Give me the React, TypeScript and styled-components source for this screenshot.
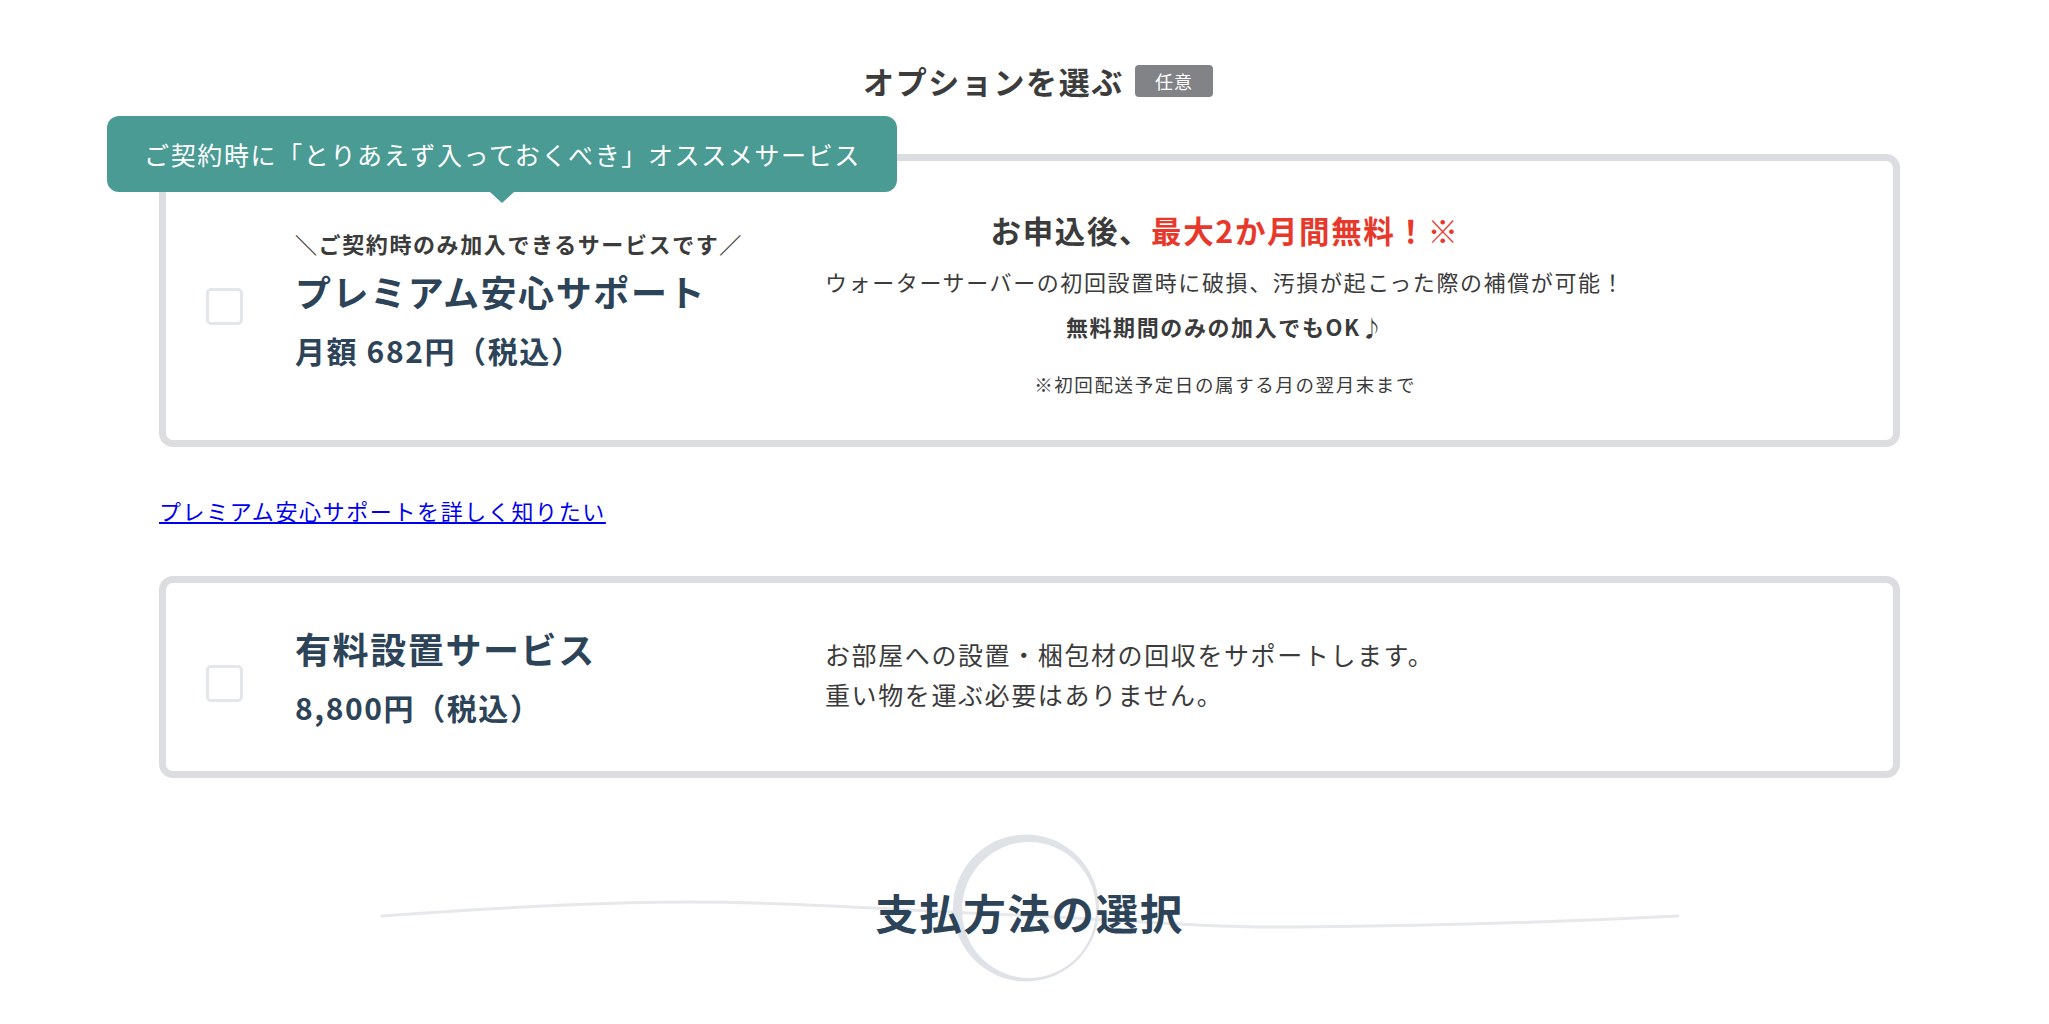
import React from 'react';
import styled, { createGlobalStyle } from 'styled-components';

const GlobalStyle = createGlobalStyle`
  html, body {
    margin: 0;
    padding: 0;
    background: #ffffff;
    overflow: hidden;
  }
  body {
    font-family: "Noto Sans CJK JP", "Noto Sans", sans-serif;
    letter-spacing: 0.1em;
    color: #3b3b3b;
  }
`;

const Page = styled.main`
  display: flex;
  flex-direction: column;
  padding: 58px 149px 0 159px;
`;

const TitleRow = styled.div`
  display: flex;
  align-items: center;
  justify-content: center;
  gap: 11px;
  height: 46px;
  padding-left: 17px;
`;

const Title = styled.h2`
  margin: 0;
  font-size: 31px;
  font-weight: 700;
  line-height: 46px;
  color: #3c3c3c;
`;

const Badge = styled.span`
  display: inline-flex;
  align-items: center;
  justify-content: center;
  width: 78px;
  height: 32px;
  border-radius: 4px;
  background: #818386;
  color: #ffffff;
  font-size: 18px;
  letter-spacing: 0.05em;
`;

const Card = styled.label<{ $minHeight: number; $mt: number }>`
  position: relative;
  display: flex;
  align-items: center;
  box-sizing: border-box;
  min-height: ${(p) => p.$minHeight}px;
  margin-top: ${(p) => p.$mt}px;
  padding: 0 40px;
  border: 7px solid #dcdde0;
  border-radius: 14px;
  background: #ffffff;
  cursor: pointer;
`;

const Tooltip = styled.div`
  position: absolute;
  left: -59px;
  top: -45px;
  display: flex;
  align-items: center;
  box-sizing: border-box;
  height: 76px;
  padding: 0 36px 0 37px;
  border-radius: 12px;
  background: #4a9b94;
  color: #ffffff;
  font-size: 25px;
  letter-spacing: 0.065em;
  white-space: nowrap;

  &::after {
    content: "";
    position: absolute;
    left: 383px;
    top: 100%;
    border-left: 12px solid transparent;
    border-right: 12px solid transparent;
    border-top: 11px solid #4a9b94;
  }
`;

const CheckBox = styled.span`
  flex-shrink: 0;
  box-sizing: border-box;
  width: 37px;
  height: 37px;
  margin: 12px 52px 0 0;
  border: 3px solid #e3e6ea;
  border-radius: 5px;
  background: #ffffff;
`;

const LeftCol = styled.div`
  display: flex;
  flex-direction: column;
  flex-shrink: 0;
  width: 530px;
  margin-top: -4px;
`;

const Catch = styled.div`
  font-size: 22px;
  font-weight: 700;
  line-height: 32px;
  color: #3b3b3b;
  margin-bottom: 7px;
`;

const ServiceName = styled.div`
  font-size: 36px;
  font-weight: 700;
  line-height: 50px;
  color: #2c4358;
`;

const Price = styled.div`
  margin-top: 14px;
  font-size: 30px;
  font-weight: 700;
  line-height: 40px;
  color: #2c4358;
`;

const RightCol = styled.div<{ $center?: boolean; $mt?: number }>`
  display: flex;
  flex-direction: column;
  align-items: ${(p) => (p.$center ? 'center' : 'flex-start')};
  text-align: ${(p) => (p.$center ? 'center' : 'left')};
  margin-top: ${(p) => p.$mt ?? 0}px;
`;

const Lead = styled.div`
  font-size: 30.5px;
  font-weight: 700;
  line-height: 48px;
  color: #3b3b3b;
`;

const Red = styled.span`
  color: #e8382b;
`;

const Desc = styled.div<{ $size: number; $lh: number; $bold?: boolean; $mt?: number }>`
  font-size: ${(p) => p.$size}px;
  line-height: ${(p) => p.$lh}px;
  font-weight: ${(p) => (p.$bold ? 700 : 400)};
  margin-top: ${(p) => p.$mt ?? 0}px;
  color: #3b3b3b;
`;

const DetailLink = styled.a`
  align-self: flex-start;
  margin-top: 47px;
  font-size: 22px;
  line-height: 33px;
  color: #0000ee;
  text-decoration: underline;
`;

const SectionHead = styled.section`
  position: relative;
  display: flex;
  align-items: center;
  justify-content: center;
  height: 160px;
  margin-top: 52px;
  padding-top: 4px;
  box-sizing: border-box;
`;

const Deco = styled.svg`
  position: absolute;
  left: 0;
  top: 0;
  width: 100%;
  height: 160px;
  pointer-events: none;
`;

const SectionTitle = styled.h2`
  position: relative;
  z-index: 1;
  margin: 0;
  font-size: 42.5px;
  font-weight: 700;
  line-height: 60px;
  color: #2c4358;
`;

export default function App() {
  return (
    <>
      <GlobalStyle />
      <Page>
        <TitleRow>
          <Title>オプションを選ぶ</Title>
          <Badge>任意</Badge>
        </TitleRow>

        <Card $minHeight={293} $mt={50}>
          <Tooltip>ご契約時に「とりあえず入っておくべき」オススメサービス</Tooltip>
          <CheckBox />
          <LeftCol>
            <Catch>＼ご契約時のみ加入できるサービスです／</Catch>
            <ServiceName>プレミアム安心サポート</ServiceName>
            <Price>月額 682円（税込）</Price>
          </LeftCol>
          <RightCol $center $mt={3}>
            <Lead>
              お申込後、<Red>最大2か月間無料！※</Red>
            </Lead>
            <Desc $size={22} $lh={36} $mt={9}>
              ウォーターサーバーの初回設置時に破損、汚損が起こった際の補償が可能！
            </Desc>
            <Desc $size={22} $lh={36} $mt={9} $bold>
              無料期間のみの加入でもOK♪
            </Desc>
            <Desc $size={18.5} $lh={28} $mt={26}>
              ※初回配送予定日の属する月の翌月末まで
            </Desc>
          </RightCol>
        </Card>

        <DetailLink href="#premium">プレミアム安心サポートを詳しく知りたい</DetailLink>

        <Card $minHeight={202} $mt={49}>
          <CheckBox />
          <LeftCol>
            <ServiceName>有料設置サービス</ServiceName>
            <Price>8,800円（税込）</Price>
          </LeftCol>
          <RightCol $mt={-6}>
            <Desc $size={25} $lh={40}>お部屋への設置・梱包材の回収をサポートします。</Desc>
            <Desc $size={25} $lh={40}>重い物を運ぶ必要はありません。</Desc>
          </RightCol>
        </Card>

        <SectionHead>
          <Deco viewBox="0 0 1741 160" preserveAspectRatio="none">
            <path
              d="M223,86 C330,78 430,72 535,72 C650,72 760,82 860,85 C960,90 1050,98 1138,97 C1260,96 1400,92 1519,86"
              fill="none"
              stroke="#e6e8eb"
              strokeWidth={3}
              strokeLinecap="round"
            />
            <path
              fillRule="evenodd"
              fill="#dfe2e7"
              d="M794,78 A73,73.5 0 1,0 940,78 A73,73.5 0 1,0 794,78 Z M803,80 A67,68 0 1,1 937,80 A67,68 0 1,1 803,80 Z"
            />
          </Deco>
          <SectionTitle>支払方法の選択</SectionTitle>
        </SectionHead>
      </Page>
    </>
  );
}
